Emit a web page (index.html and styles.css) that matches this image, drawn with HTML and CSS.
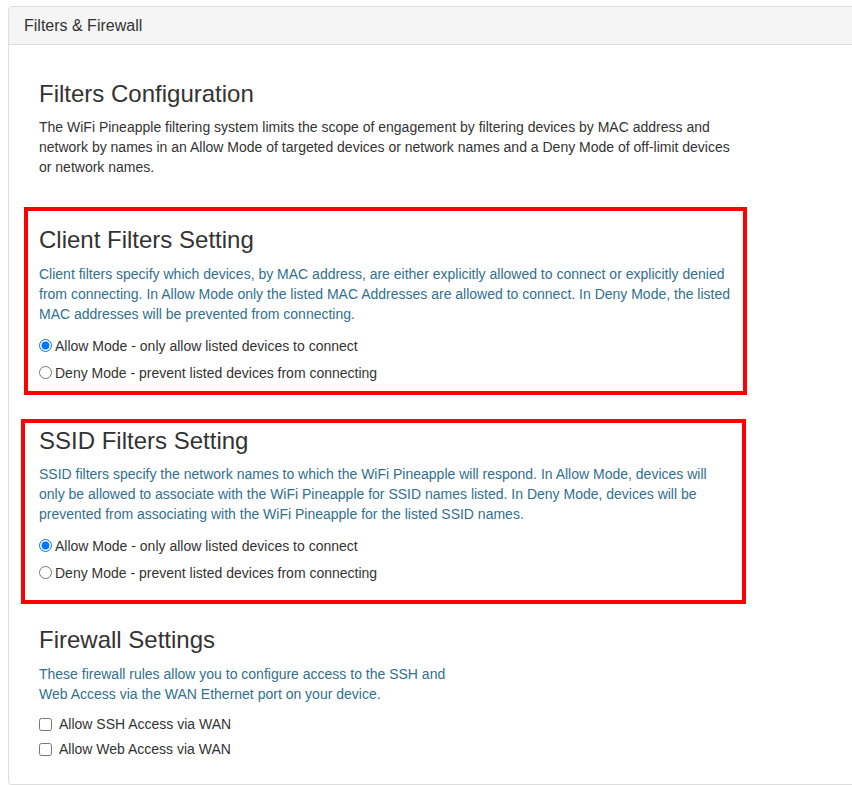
FILE: index.html
```html
<!DOCTYPE html>
<html lang="en">
<head>
<meta charset="utf-8">
<title>Filters &amp; Firewall</title>
<link rel="stylesheet" href="styles.css">
</head>
<body>
<div class="panel">
  <div class="panel-heading">Filters &amp; Firewall</div>
  <div class="panel-body">
    <section class="intro">
      <h3>Filters Configuration</h3>
      <p class="lead-text">The WiFi Pineapple filtering system limits the scope of engagement by filtering devices by MAC address and network by names in an Allow Mode of targeted devices or network names and a Deny Mode of off-limit devices or network names.</p>
    </section>

    <section class="mark-box box-client">
      <h3>Client Filters Setting</h3>
      <p class="info">Client filters specify which devices, by MAC address, are either explicitly allowed to connect or explicitly denied from connecting. In Allow Mode only the listed MAC Addresses are allowed to connect. In Deny Mode, the listed MAC addresses will be prevented from connecting.</p>
      <div class="options">
        <label class="opt"><input type="radio" name="client" checked>Allow Mode - only allow listed devices to connect</label>
        <label class="opt"><input type="radio" name="client">Deny Mode - prevent listed devices from connecting</label>
      </div>
    </section>

    <section class="mark-box box-ssid">
      <h3>SSID Filters Setting</h3>
      <p class="info">SSID filters specify the network names to which the WiFi Pineapple will respond. In Allow Mode, devices will only be allowed to associate with the WiFi Pineapple for SSID names listed. In Deny Mode, devices will be prevented from associating with the WiFi Pineapple for the listed SSID names.</p>
      <div class="options">
        <label class="opt"><input type="radio" name="ssid" checked>Allow Mode - only allow listed devices to connect</label>
        <label class="opt"><input type="radio" name="ssid">Deny Mode - prevent listed devices from connecting</label>
      </div>
    </section>

    <section class="firewall">
      <h3>Firewall Settings</h3>
      <p class="info">These firewall rules allow you to configure access to the SSH and<br>Web Access via the WAN Ethernet port on your device.</p>
      <div class="checks">
        <label class="chk"><input type="checkbox">Allow SSH Access via WAN</label>
        <label class="chk"><input type="checkbox">Allow Web Access via WAN</label>
      </div>
    </section>
  </div>
</div>
</body>
</html>
```
FILE: styles.css
```css
html, body {
  margin: 0;
  padding: 0;
  background: #fff;
  overflow: hidden;
}

body {
  font-family: "Liberation Sans", Arial, Helvetica, sans-serif;
  font-size: 14px;
  line-height: 20px;
  color: #333;
}

.panel {
  margin: 6px -30px 0 8px;
  border: 1px solid #ddd;
  border-radius: 4px;
  background: #fff;
  box-shadow: 0 1px 1px rgba(0,0,0,0.05);
}

.panel-heading {
  background: #f5f5f5;
  border-bottom: 1px solid #ddd;
  border-radius: 3px 3px 0 0;
  padding: 10px 15px;
  font-size: 16px;
  line-height: 17px;
  color: #333;
}

.panel-body {
  padding: 0 15px 25px 15px;
}

h3 {
  font-size: 24px;
  font-weight: 500;
  line-height: 1.1;
  margin: 0 0 10px 0;
  color: #333;
}

p {
  margin: 0;
  max-width: 694px;
}

.info {
  color: #31708f;
}

.intro {
  padding-left: 15px;
  padding-top: 36px;
}

.mark-box {
  border: 4px solid #ff0000;
  box-sizing: border-box;
}

.box-client {
  margin-top: 30px;
  width: 723px;
  padding: 16px 0 8px 11px;
}

.box-ssid {
  margin-top: 24px;
  margin-left: -3px;
  width: 725px;
  padding: 5px 0 17px 14px;
}

.options {
  margin-top: 12px;
  display: flex;
  flex-direction: column;
  gap: 7px;
}

.opt {
  display: block;
  line-height: 20px;
  color: #333;
}

.opt input {
  width: 13px;
  height: 13px;
  margin: 0 3px 0 0;
  vertical-align: -1px;
}

.firewall {
  margin-top: 23px;
  padding-left: 15px;
}

.checks {
  margin-top: 10px;
  display: flex;
  flex-direction: column;
  gap: 5px;
}

.chk {
  display: block;
  line-height: 20px;
  color: #333;
}

.chk input {
  width: 13px;
  height: 13px;
  margin: 0 7px 0 0;
  vertical-align: -2px;
}
```
